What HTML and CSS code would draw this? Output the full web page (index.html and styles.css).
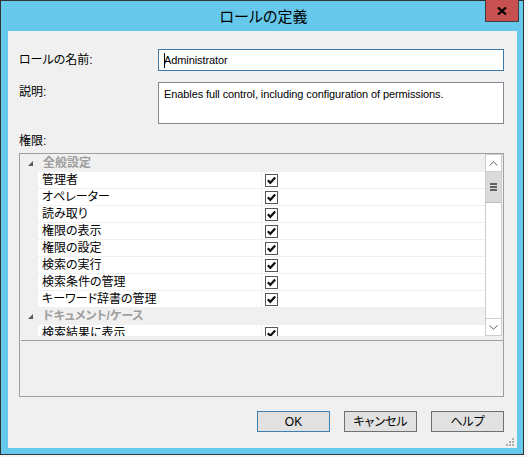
FILE: index.html
```html
<!DOCTYPE html>
<html lang="ja">
<head>
    <meta charset="UTF-8">
    <title>ロールの定義</title>
    <link rel="stylesheet" href="styles.css">
</head>
<body>
    <div class="window">
        <div class="titlebar">
            <span class="title">ロールの定義</span>
            <div class="close">
                <svg width="10" height="8" viewBox="0 0 10 8"><path d="M1 0.5 L9 7.5 M9 0.5 L1 7.5" stroke="#000" stroke-width="2.2"/></svg>
            </div>
        </div>
        <div class="client">
            <div class="field">
                <div class="label">ロールの名前:</div>
                <div class="textbox focused"><span class="caret"></span>Administrator</div>
            </div>
            <div class="field top">
                <div class="label">説明:</div>
                <div class="textbox multi">Enables full control, including configuration of permissions.</div>
            </div>
            <div class="perm-label">権限:</div>
            <div class="grid-box">
                <div class="grid">
                    <div class="rows">
                        <div class="group"><svg class="tri" width="5" height="5" viewBox="0 0 5 5"><polygon points="5,0 5,5 0,5" fill="#5a5a5a"/></svg>全般設定</div>
                        <div class="row"><div class="name">管理者</div><div class="check"><span class="cb"></span></div></div>
                        <div class="row"><div class="name">オペレーター</div><div class="check"><span class="cb"></span></div></div>
                        <div class="row"><div class="name">読み取り</div><div class="check"><span class="cb"></span></div></div>
                        <div class="row"><div class="name">権限の表示</div><div class="check"><span class="cb"></span></div></div>
                        <div class="row"><div class="name">権限の設定</div><div class="check"><span class="cb"></span></div></div>
                        <div class="row"><div class="name">検索の実行</div><div class="check"><span class="cb"></span></div></div>
                        <div class="row"><div class="name">検索条件の管理</div><div class="check"><span class="cb"></span></div></div>
                        <div class="row"><div class="name">キーワード辞書の管理</div><div class="check"><span class="cb"></span></div></div>
                        <div class="group"><svg class="tri" width="5" height="5" viewBox="0 0 5 5"><polygon points="5,0 5,5 0,5" fill="#5a5a5a"/></svg>ドキュメント/ケース</div>
                        <div class="row"><div class="name">検索結果に表示</div><div class="check"><span class="cb"></span></div></div>
                    </div>
                    <div class="vscroll">
                        <div class="arrow up">
                            <svg width="9" height="5" viewBox="0 0 9 5"><path d="M0.5 4.5 L4.5 0.8 L8.5 4.5" fill="none" stroke="#606060" stroke-width="1"/></svg>
                        </div>
                        <div class="thumb"><span></span><span></span><span></span></div>
                        <div class="track"></div>
                        <div class="arrow down">
                            <svg width="9" height="5" viewBox="0 0 9 5"><path d="M0.5 0.5 L4.5 4.2 L8.5 0.5" fill="none" stroke="#606060" stroke-width="1"/></svg>
                        </div>
                    </div>
                </div>
                <div class="grid-line"></div>
            </div>
            <div class="buttons">
                <div class="btn default">OK</div>
                <div class="btn">キャンセル</div>
                <div class="btn">ヘルプ</div>
            </div>
            <svg class="grip" width="9" height="9" viewBox="0 0 9 9" fill="#b0b0b0">
                <rect x="7" y="1" width="2" height="2"/>
                <rect x="4" y="4" width="2" height="2"/><rect x="7" y="4" width="2" height="2"/>
                <rect x="1" y="7" width="2" height="2"/><rect x="4" y="7" width="2" height="2"/><rect x="7" y="7" width="2" height="2"/>
            </svg>
        </div>
    </div>
</body>
</html>
```
FILE: styles.css
```css
body {
    margin: 0;
    background: #f6f6f6;
    font-family: "Liberation Sans", "Noto Sans CJK JP", sans-serif;
    font-size: 12px;
    line-height: 16px;
    font-feature-settings: "palt";
    color: #000;
}

.window {
    position: relative;
    width: 524px;
    height: 455px;
    box-sizing: border-box;
    border: 1px solid #333;
    background: #66c8ea;
    padding: 0 6px 6px 7px;
    display: flex;
    flex-direction: column;
}

.titlebar {
    height: 30px;
    display: flex;
    align-items: center;
    justify-content: center;
}

.title {
    font-family: "Noto Sans CJK JP", sans-serif;
    font-size: 15px;
    padding-left: 2px;
}

.close {
    position: absolute;
    left: 484px;
    top: -1px;
    width: 34px;
    height: 22px;
    box-sizing: border-box;
    background: #c75050;
    border: 1px solid #3d3d3d;
    border-top: none;
    display: flex;
    align-items: center;
    justify-content: center;
}

.client {
    position: relative;
    flex: 1;
    background: #f0f0f0;
    padding: 18px 13px 0 11px;
}

.field {
    display: flex;
    align-items: center;
}

.field.top {
    align-items: flex-start;
    margin-top: 11px;
}

.label {
    width: 139px;
}

.field.top .label {
    padding-top: 2px;
}

.textbox {
    flex: 1;
    height: 22px;
    box-sizing: border-box;
    background: #fff;
    border: 1px solid #828790;
    padding: 2px 5px;
    font-size: 11px;
    letter-spacing: -0.1px;
    line-height: 16px;
    position: relative;
}

.textbox.focused {
    border-color: #3c78a8;
}

.textbox.multi {
    height: 42px;
    padding-top: 3px;
}

.caret {
    position: absolute;
    left: 5px;
    top: 3px;
    width: 1px;
    height: 15px;
    background: #000;
}

.perm-label {
    margin-top: 9px;
    height: 16px;
}

.grid-box {
    margin-top: 4px;
    height: 244px;
    box-sizing: border-box;
    border: 1px solid #a0a0a0;
}

.grid {
    display: flex;
    height: 182px;
    padding-right: 1px;
}

.rows {
    flex: 1;
    overflow: hidden;
    padding-top: 1px;
}

.group {
    height: 16px;
    display: flex;
    align-items: center;
    font-weight: bold;
    color: #9e9e9e;
    margin-bottom: 1px;
}

.tri {
    margin: 0 10px 0 8px;
}

.row {
    display: flex;
    height: 16px;
    margin: 0 0 1px 18px;
}

.name {
    width: 219px;
    padding-left: 4px;
    background: #fff;
    display: flex;
    align-items: center;
}

.check {
    flex: 1;
    margin-left: 1px;
    padding-left: 3px;
    background: #fff;
    display: flex;
    align-items: center;
}

.cb {
    width: 13px;
    height: 13px;
    box-sizing: border-box;
    border: 1px solid #555;
    background: #fff url("data:image/svg+xml,%3Csvg xmlns='http://www.w3.org/2000/svg' width='11' height='11'%3E%3Cpath d='M1.8 5.2 L4.3 7.8 L9.2 2.4' fill='none' stroke='%23111' stroke-width='2.2'/%3E%3C/svg%3E") no-repeat center;
}

.vscroll {
    width: 17px;
    box-sizing: border-box;
    border: 1px solid #cdcdcd;
    background: #fff;
    display: flex;
    flex-direction: column;
}

.arrow {
    height: 16px;
    display: flex;
    align-items: center;
    justify-content: center;
}

.arrow.up {
    border-bottom: 1px solid #cdcdcd;
}

.arrow.down {
    border-top: 1px solid #cdcdcd;
}

.thumb {
    height: 31px;
    box-sizing: border-box;
    background: #dadada;
    border-bottom: 1px solid #bdbdbd;
    display: flex;
    flex-direction: column;
    align-items: center;
    justify-content: center;
    gap: 1px;
}

.thumb span {
    width: 7px;
    height: 2px;
    background: #606060;
}

.track {
    flex: 1;
}

.grid-line {
    margin: 4px 0 0 1px;
    height: 1px;
    background: #a0a0a0;
}

.buttons {
    margin-top: 14px;
    display: flex;
    justify-content: flex-end;
    gap: 14px;
}

.btn {
    width: 73px;
    height: 21px;
    box-sizing: border-box;
    background: #e1e1e1;
    border: 1px solid #707070;
    display: flex;
    align-items: center;
    justify-content: center;
}

.btn.default {
    border-color: #3c7fb1;
}

.grip {
    position: absolute;
    right: 3px;
    bottom: 2px;
}
```
